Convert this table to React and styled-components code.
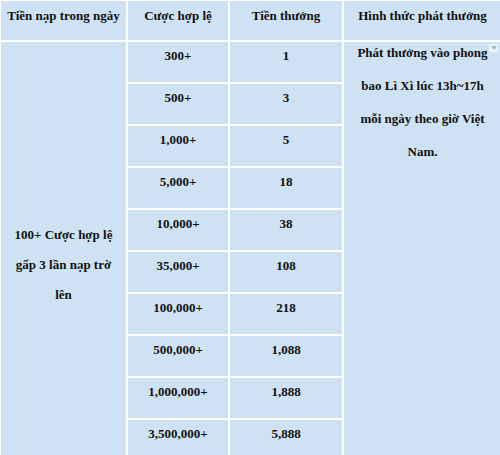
import React from 'react';
import styled, { createGlobalStyle } from 'styled-components';

const GlobalStyle = createGlobalStyle`
  html, body {
    margin: 0;
    padding: 0;
    background: #fff;
    overflow: hidden;
  }
  body {
    width: 500px;
    height: 455px;
  }
`;

const Table = styled.table`
  width: 502px;
  margin: -1px 0 0 -1px;
  border-collapse: collapse;
  table-layout: fixed;
`;

const Cell = styled.td`
  font-family: "Liberation Serif", "DejaVu Serif", serif;
  font-weight: 700;
  font-size: 13px;
  color: #111;
  background: #cfe2f3;
  border: 2px solid #fff;
  text-align: center;
  vertical-align: top;
  height: ${(p) => p.$h || 38}px;
  padding: 6px 4px 0;
  line-height: 16px;
  box-sizing: border-box;
`;

const HeadCell = styled(Cell).attrs({ as: 'th' })`
  height: 41px;
  padding-top: 7px;
`;

const MergedLeft = styled(Cell)`
  vertical-align: middle;
  padding: 28px 10px 0;
  line-height: 30px;
`;

const MergedRight = styled(Cell)`
  position: relative;
  padding: 0 8px;
  line-height: 33px;
`;

const Note = styled.p`
  margin: -6px 0 0;
`;

const SortBadge = styled.span`
  position: absolute;
  top: 2px;
  right: 3px;
  width: 9px;
  height: 8px;
  background: #eef4fa;
  display: flex;
  align-items: center;
  justify-content: center;

  &::after {
    content: '';
    border-left: 3px solid transparent;
    border-right: 3px solid transparent;
    border-top: 4px solid #a9b4bf;
  }
`;

const rows = [
  ['300+', '1'],
  ['500+', '3'],
  ['1,000+', '5'],
  ['5,000+', '18'],
  ['10,000+', '38'],
  ['35,000+', '108'],
  ['100,000+', '218'],
  ['500,000+', '1,088'],
  ['1,000,000+', '1,888'],
  ['3,500,000+', '5,888'],
];

export default function App() {
  return (
    <>
      <GlobalStyle />
      <Table>
        <colgroup>
          <col style={{ width: 127 }} />
          <col style={{ width: 102 }} />
          <col style={{ width: 114 }} />
          <col style={{ width: 159 }} />
        </colgroup>
        <thead>
          <tr>
            <HeadCell>Tiền nạp trong ngày</HeadCell>
            <HeadCell>Cược hợp lệ</HeadCell>
            <HeadCell>Tiền thưởng</HeadCell>
            <HeadCell>Hình thức phát thưởng</HeadCell>
          </tr>
        </thead>
        <tbody>
          {rows.map(([bet, reward], i) => (
            <tr key={bet}>
              {i === 0 && (
                <MergedLeft rowSpan={rows.length}>
                  100+ Cược hợp lệ gấp 3 lần nạp trờ lên
                </MergedLeft>
              )}
              <Cell $h={42}>{bet}</Cell>
              <Cell $h={42}>{reward}</Cell>
              {i === 0 && (
                <MergedRight rowSpan={rows.length}>
                  <SortBadge />
                  <Note>
                    Phát thưởng vào phong bao Lì Xì lúc 13h~17h mỗi ngày theo
                    giờ Việt Nam.
                  </Note>
                </MergedRight>
              )}
            </tr>
          ))}
        </tbody>
      </Table>
    </>
  );
}
